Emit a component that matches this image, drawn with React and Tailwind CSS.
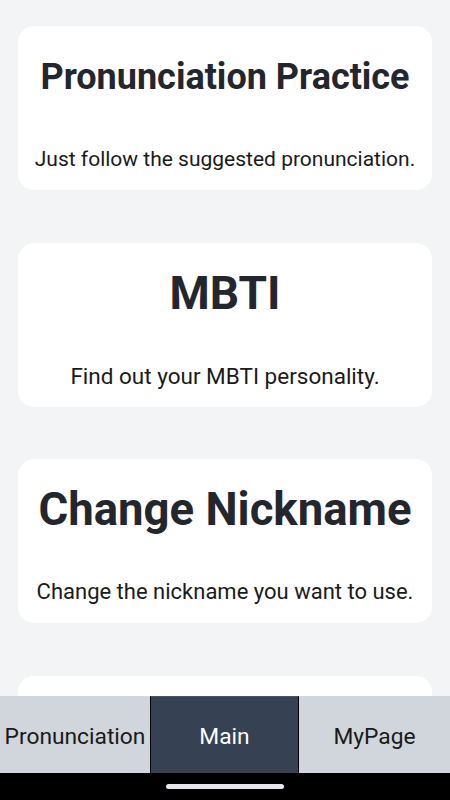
import React from "react";

const cards = [
  { title: "Pronunciation Practice", size: "text-[36px]", descSize: "text-[21px]", desc: "Just follow the suggested pronunciation." },
  { title: "MBTI", size: "text-[46px]", descSize: "text-[22.5px]", desc: "Find out your MBTI personality." },
  { title: "Change Nickname", size: "text-[45.5px]", descSize: "text-[22px]", desc: "Change the nickname you want to use." },
  { title: "Quiz", size: "text-[44px]", descSize: "text-[22px]", desc: "Test what you have learned." },
];

function Card({ title, size, descSize, desc }) {
  return (
    <div className="h-[164px] shrink-0 rounded-2xl bg-white flex flex-col items-center">
      <div className="h-[101px] flex items-center justify-center">
        <h2 className={`${size} font-bold leading-none text-[#23262d] whitespace-nowrap`}>{title}</h2>
      </div>
      <p className={`mt-auto pb-[17px] ${descSize} leading-7 text-[#1a1a1a] whitespace-nowrap`}>{desc}</p>
    </div>
  );
}

export default function App() {
  return (
    <div
      className="w-[450px] h-[800px] flex flex-col bg-gray-100 overflow-hidden"
      style={{ fontFamily: "Roboto, 'Liberation Sans', sans-serif" }}
    >
      <main className="flex-1 min-h-0 overflow-hidden px-[18px] pt-[26px] flex flex-col gap-[52.5px]">
        {cards.map((c) => (
          <Card key={c.title} {...c} />
        ))}
      </main>

      <nav className="h-[77px] shrink-0 flex text-[22.75px] leading-none">
        <button className="w-[150px] pt-[5px] bg-gray-300 text-[#1a1a1a] whitespace-nowrap">Pronunciation</button>
        <button className="w-[149px] pt-[5px] bg-gray-700 text-white border-x border-black border-t border-t-gray-600">
          Main
        </button>
        <button className="flex-1 pt-[5px] bg-gray-300 text-[#1a1a1a]">MyPage</button>
      </nav>

      <div className="h-[27px] shrink-0 bg-black flex items-center justify-center">
        <div className="w-[118px] h-[5px] rounded-full bg-gray-200" />
      </div>
    </div>
  );
}
